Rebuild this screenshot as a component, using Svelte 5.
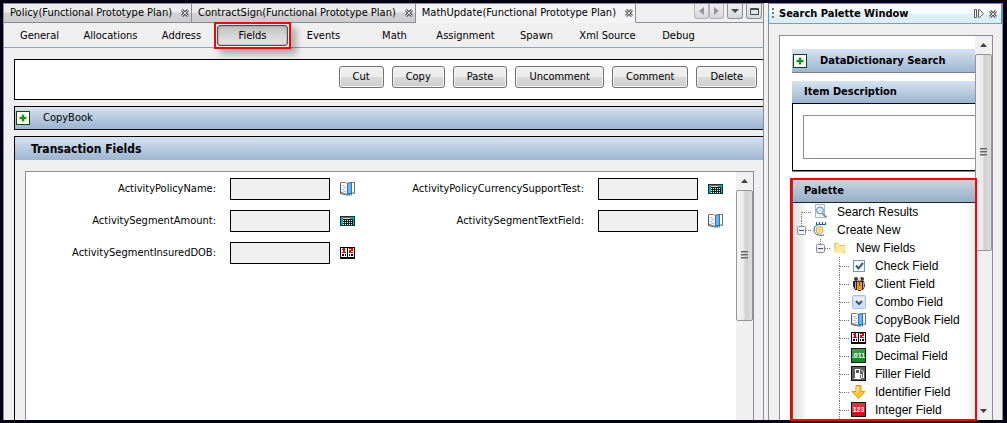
<script lang="ts">
	type TreeItem = { label: string; icon: string };

	const documents = ['Policy', 'ContractSign', 'MathUpdate'];
	const sections = [
		'General',
		'Allocations',
		'Address',
		'Fields',
		'Events',
		'Math',
		'Assignment',
		'Spawn',
		'Xml Source',
		'Debug'
	];
	const actions = ['Cut', 'Copy', 'Paste', 'Uncomment', 'Comment', 'Delete'];

	const fields = [
		{ name: 'ActivityPolicyName', icon: 'book' },
		{ name: 'ActivityPolicyCurrencySupportTest', icon: 'calculator' },
		{ name: 'ActivitySegmentAmount', icon: 'calculator' },
		{ name: 'ActivitySegmentTextField', icon: 'book' },
		{ name: 'ActivitySegmentInsuredDOB', icon: 'date' }
	];

	const newFields: TreeItem[] = [
		{ label: 'Check Field', icon: 'check' },
		{ label: 'Client Field', icon: 'client' },
		{ label: 'Combo Field', icon: 'combo' },
		{ label: 'CopyBook Field', icon: 'book' },
		{ label: 'Date Field', icon: 'date' },
		{ label: 'Decimal Field', icon: 'decimal' },
		{ label: 'Filler Field', icon: 'filler' },
		{ label: 'Identifier Field', icon: 'identifier' },
		{ label: 'Integer Field', icon: 'integer' }
	];

	let activeDocument = $state('MathUpdate');
	let activeSection = $state('Fields');
	let createOpen = $state(true);
	let fieldsOpen = $state(true);
</script>

{#snippet cross()}
	<svg width="8" height="8" viewBox="0 0 8 8" aria-hidden="true">
		<path d="M1 1l6 6M7 1l-6 6" stroke="#55565c" stroke-width="3" />
		<path d="M1 1l6 6M7 1l-6 6" stroke="#e4e4e6" stroke-width="1" />
	</svg>
{/snippet}

{#snippet plus()}
	<svg width="14" height="14" viewBox="0 0 14 14" aria-hidden="true">
		<rect x="0.5" y="0.5" width="13" height="13" fill="#fff" stroke="#0b4a0b" />
		<path d="M7 3v8M3 7h8" stroke="#9bd890" stroke-width="3" />
		<path d="M7 4v6M4 7h6" stroke="#12951b" stroke-width="2" />
	</svg>
{/snippet}

{#snippet icon(name: string)}
	<svg class="icon" width="16" height="16" viewBox="0 0 16 16" aria-hidden="true">
		{#if name === 'book'}
			<path d="M.5 1.5h5l2 1 2-1h5v10.500h-5l-2 1.500-2-1-5-1z" fill="#fff" stroke="#8b7b5c" />
			<path d="M.5 3v9.500l5 1 2 1" fill="none" stroke="#44577f" />
			<path d="M12.500 1.500h2v10.500h-2" fill="#fffbe8" stroke="#8b7030" />
			<path d="M7.500 3v10" stroke="#a7b1c2" />
			<path d="M2 4.500h3M3 6.500h3M2 8.500h3M3 10.500h3" stroke="#b5c3d8" />
			<path d="M7 2l5-1v14l-1.500-2-1.500 2.500L8 13H7z" fill="#1f74cf" />
			<path d="M8 2.500l3-.500v10H8z" fill="#68b5fb" />
		{:else if name === 'calculator'}
			<g shape-rendering="crispEdges">
				<path d="M0 3h15v10H0z" fill="#003b3b" />
				<path d="M1 4h13v8H1z" fill="#15a69d" />
				<path d="M3 4h7v2H3z" fill="#e9c8c8" />
				<path d="M3 4h7v1H3z" fill="#ba4b4b" />
				<path d="M3 6h10v6H3z" fill="#031e20" />
				<path
					d="M3 7h1v1H3zM5 7h1v1H5zM7 7h1v1H7zM9 7h1v1H9zM11 7h1v1h-1zM3 9h1v1H3zM5 9h1v1H5zM7 9h1v1H7zM9 9h1v1H9zM11 9h1v1h-1zM3 11h1v1H3zM5 11h1v1H5zM7 11h1v1H7zM9 11h1v1H9zM11 11h1v1h-1z"
					fill="#d9fffa"
				/>
			</g>
		{:else if name === 'date'}
			<g shape-rendering="crispEdges">
				<path d="M0 2h15v12H0z" fill="#000" />
				<path d="M1 3h6v9H1zM8 3h6v9H8z" fill="#fff" />
				<path d="M3 3h2v4h1v1H2V7h1V5H2V4h1z" fill="#e30000" />
				<path d="M9 3h4v3h-2v1h2v1H9V5h2V4H9z" fill="#e30000" />
				<path d="M2 9h2v2H2zM5 9h1v2H5zM9 9h1v2H9zM11 9h2v2h-2zM7 12h1v1H7z" fill="#000" />
			</g>
		{:else if name === 'search'}
			<path d="M2.5.5h9v13h-9z" fill="#f3f6fb" stroke="#a6b5c9" />
			<circle cx="7" cy="6.5" r="3.5" fill="#c9ebff" stroke="#718aa6" />
			<path d="M9.5 9.5l4 4" stroke="#a18b83" stroke-width="2" />
		{:else if name === 'create'}
			<path d="M3.5 0v3M6.5 0v3M9.5 0v3M12.5 0v3" stroke="#1261a0" />
			<path d="M13 2.5H6C3 2.500 1 5 1 8c0 4 4 6 10 5" fill="none" stroke="#1261a0" />
			<circle cx="6.5" cy="8" r="3.5" fill="#fff7d2" stroke="#d89a25" />
			<circle cx="6.5" cy="8" r="2" fill="#f6cd70" />
		{:else if name === 'folder'}
			<path d="M2 3h4l1 2h6v8H3z" fill="#e9bd50" />
			<path d="M4 6h10l-2 7H3z" fill="#ffe99b" />
			<path d="M3 4h3l1 2-3 1z" fill="#fff3bd" />
		{:else if name === 'check'}
			<rect x="2.5" y="2.5" width="11" height="11" fill="#f8fbff" stroke="#7794b5" />
			<path d="M5 7.5l2.500 3L12 5" fill="none" stroke="#345b83" stroke-width="2" />
		{:else if name === 'client'}
			<path d="M2 5h5v9H4l-2-4zM7 4h3v11H7zM10 5h3l1 5-2 4h-2z" fill="#242329" />
			<path d="M4 6h1v7H4zM12 6h1v6h-1z" fill="#aaa6a1" />
			<path d="M6 6h5v8H6z" fill="#ed9d13" />
			<path d="M8 5h1v5H8z" fill="#9d3720" />
			<circle cx="5" cy="3" r="2" fill="#44372f" />
			<circle cx="11" cy="3" r="2" fill="#44372f" />
			<circle cx="8.5" cy="3.5" r="1.500" fill="#ffd98c" />
		{:else if name === 'combo'}
			<rect x="1.5" y="1.5" width="13" height="13" rx="1" fill="#cfe0fc" stroke="#a6c0ea" />
			<path d="M3 3h10v5H3z" fill="#e4eeff" />
			<path d="M5 7l3 3 3-3" fill="none" stroke="#3e5371" stroke-width="2" />
		{:else if name === 'decimal' || name === 'integer'}
			<rect
				x="0.5"
				y="0.5"
				width="14"
				height="14"
				fill={name === 'decimal' ? '#0e8f20' : '#cd1418'}
				stroke="#18191a"
			/>
			<path d="M1 1h13v4L1 10z" fill="#fff" opacity="0.15" />
			<text x="7.5" y="10" text-anchor="middle" class="digits">
				{name === 'decimal' ? '.011' : '123'}
			</text>
		{:else if name === 'filler'}
			<rect x="0.5" y="0.5" width="14" height="14" fill="#5f5f5f" stroke="#111" />
			<path d="M4 3h5v9h1v1H3v-1h1z" fill="#fff" />
			<path d="M5 4h3v3H5z" fill="#555" />
			<path d="M9 8.500h1.500v3h2V6L10 3.500" fill="none" stroke="#fff" />
		{:else if name === 'identifier'}
			<path d="M5 1.5h5v6h4l-6.500 7-6.500-7h4z" fill="#ffc52d" stroke="#d99a1a" />
			<path d="M6.5 3v6" stroke="#ffe69a" stroke-width="2" />
		{/if}
	</svg>
{/snippet}

{#snippet guide(kind: string)}
	<svg class="guide" width="16" height="18" viewBox="0 0 16 18" aria-hidden="true">
		{#if kind !== 'first'}<path d="M4.5 0v9" />{/if}
		{#if kind === 'first' || kind === 'leaf'}<path d="M4.5 9v9" />{/if}
		<path d="M5 9.5h9" />
		{#if kind === 'open' || kind === 'closed'}
			<rect x="0.5" y="5.5" width="8" height="8" rx="1" />
			<path class="sign" d="M2 9.5h5" />
			{#if kind === 'closed'}<path class="sign" d="M4.5 7v5" />{/if}
		{/if}
	</svg>
{/snippet}

{#snippet arrow(down: boolean)}
	<svg width="7" height="4" viewBox="0 0 7 4" aria-hidden="true">
		<path d={down ? 'M0 0h7L3.500 4z' : 'M0 4h7L3.500 0z'} fill="#3f3f3f" />
	</svg>
{/snippet}

<div class="frame">
	<main class="editor">
		<div class="tabs">
			{#each documents as doc (doc)}
				<div class="tab" class:active={doc === activeDocument}>
					<button type="button" class="tab-name" onclick={() => (activeDocument = doc)}>
						{doc}(Functional Prototype Plan)
					</button>
					<button type="button" class="close" aria-label="Close {doc}">{@render cross()}</button>
				</div>
			{/each}
			<div class="window-tools">
				<div class="pair">
					<button type="button" aria-label="Scroll tabs left">
						<svg width="5" height="8" viewBox="0 0 5 8"><path d="M5 0v8L0 4z" fill="#93969b" /></svg>
					</button>
					<button type="button" aria-label="Scroll tabs right">
						<svg width="5" height="8" viewBox="0 0 5 8"><path d="M0 0v8l5-4z" fill="#93969b" /></svg>
					</button>
				</div>
				<button type="button" aria-label="Show open documents">
					<svg width="8" height="4" viewBox="0 0 8 4"><path d="M0 0h8L4 4z" fill="#3e4a50" /></svg>
				</button>
				<button type="button" aria-label="Maximize">
					<svg width="9" height="7" viewBox="0 0 9 7">
						<path d="M.5.5h8v6h-8zM0 1.5h9" fill="none" stroke="#3e4a50" />
					</svg>
				</button>
			</div>
		</div>

		<nav>
			{#each sections as section (section)}
				<button
					type="button"
					class="section"
					class:pressed={section === activeSection}
					onclick={() => (activeSection = section)}
				>
					{section}
				</button>
			{/each}
		</nav>

		<div class="work">
			<div class="actions">
				{#each actions as action (action)}
					<button type="button">{action}</button>
				{/each}
			</div>

			<div class="copybook">
				<button type="button" class="expand" aria-label="Expand CopyBook">{@render plus()}</button>
				<span>CopyBook</span>
			</div>

			<section class="transaction">
				<h2 class="bar">Transaction Fields</h2>
				<div class="sheet">
					<div class="fields">
						{#each fields as field (field.name)}
							<label for={field.name}>{field.name}:</label>
							<input id={field.name} type="text" readonly />
							{@render icon(field.icon)}
						{/each}
					</div>
					<div class="scrollbar main-scroll">
						<span class="arrow">{@render arrow(false)}</span>
						<span class="thumb"><i></i></span>
						<span class="rest"></span>
					</div>
				</div>
			</section>
		</div>
	</main>

	<aside>
		<header>
			<span class="grip"></span>
			<h1>Search Palette Window</h1>
			<button type="button" class="close" aria-label="Minimize palette">
				<svg width="10" height="9" viewBox="0 0 10 9">
					<path d="M.5.5h2v8h-2zM4.500.5h1l4 4-4 4h-1z" fill="#f5f5f5" stroke="#55565c" />
				</svg>
			</button>
			<button type="button" class="close" aria-label="Close palette">{@render cross()}</button>
		</header>

		<div class="side">
			<div class="side-content">
				<div class="dictionary bar">
					<button type="button" class="expand" aria-label="Expand DataDictionary Search">
						{@render plus()}
					</button>
					<h2>DataDictionary Search</h2>
				</div>

				<section class="description">
					<h2 class="bar" id="description-title">Item Description</h2>
					<div class="description-box">
						<textarea aria-labelledby="description-title" readonly></textarea>
					</div>
				</section>

				<section class="palette">
					<h2 class="bar">Palette</h2>
					<ul class="tree">
						<li>
							<div class="row">
								{@render guide('first')}{@render icon('search')}<span>Search Results</span>
							</div>
						</li>
						<li>
							<div class="row">
								<button
									type="button"
									class="toggle"
									aria-label="Toggle Create New"
									onclick={() => (createOpen = !createOpen)}
								>
									{@render guide(createOpen ? 'open' : 'closed')}
								</button>
								{@render icon('create')}<span>Create New</span>
							</div>
							{#if createOpen}
								<ul>
									<li>
										<div class="row">
											<button
												type="button"
												class="toggle"
												aria-label="Toggle New Fields"
												onclick={() => (fieldsOpen = !fieldsOpen)}
											>
												{@render guide(fieldsOpen ? 'open' : 'closed')}
											</button>
											{@render icon('folder')}<span>New Fields</span>
										</div>
										{#if fieldsOpen}
											<ul>
												{#each newFields as item (item.label)}
													<li class="row">
														{@render guide('leaf')}{@render icon(item.icon)}<span>{item.label}</span>
													</li>
												{/each}
											</ul>
										{/if}
									</li>
								</ul>
							{/if}
						</li>
					</ul>
				</section>
			</div>
			<div class="scrollbar side-scroll">
				<span class="arrow">{@render arrow(false)}</span>
				<span class="thumb"><i></i></span>
				<span class="rest"></span>
				<span class="arrow">{@render arrow(true)}</span>
			</div>
		</div>
	</aside>
</div>

<style>
	:global(body) {
		margin: 0;
	}

	.frame {
		box-sizing: border-box;
		display: flex;
		min-height: 100vh;
		padding: 3px 4px 3px 3px;
		background: #000014;
		font-family: 'DejaVu Sans Condensed', 'DejaVu Sans', sans-serif;
		font-stretch: condensed;
		font-size: 11px;
		line-height: 14px;
		color: #000;
	}

	.frame :global(*) {
		box-sizing: border-box;
	}

	svg {
		display: block;
		flex: none;
	}

	button {
		padding: 0;
		border: 0;
		background: none;
		font: inherit;
		color: inherit;
		white-space: nowrap;
	}

	h1,
	h2 {
		margin: 0;
		font-size: 11px;
		line-height: 16px;
		white-space: nowrap;
	}

	ul {
		margin: 0;
		padding: 0;
		list-style: none;
	}

	.editor {
		display: flex;
		flex: 1;
		flex-direction: column;
		min-width: 0;
		border: 1px solid #898c95;
		border-bottom: 0;
		background: #efefef;
	}

	.tabs {
		display: flex;
		height: 19px;
	}

	.tab {
		display: flex;
		align-items: center;
		gap: 9px;
		padding: 0 2px 0 6px;
		border-right: 1px solid #898c95;
		border-bottom: 1px solid #898c95;
		background: linear-gradient(#ececec 45%, #d2d2d2 50%, #cdcdcd);
	}

	.tab.active {
		border-bottom-color: #f4f4f4;
		background: #f4f4f4;
	}

	.close {
		display: grid;
		place-items: center;
	}

	.window-tools {
		display: flex;
		flex: 1;
		justify-content: flex-end;
		gap: 3px;
		padding-right: 1px;
		border-bottom: 1px solid #898c95;
	}

	.window-tools button {
		display: grid;
		place-items: center;
		width: 16px;
		height: 15px;
		border: 1px solid #8d9094;
		border-top: 0;
		border-radius: 0 0 3px 3px;
		background: linear-gradient(#efefef, #d8d8d8);
	}

	.pair {
		display: flex;
	}

	.pair button {
		width: 15px;
		border-color: #b4b4b4;
	}

	nav {
		display: flex;
		height: 25px;
		padding-top: 2px;
		border-bottom: 1px solid #8aa5c2;
	}

	.section {
		width: 71px;
		height: 21px;
	}

	.section.pressed {
		position: relative;
		z-index: 1;
		border: 1px solid #4e4e4e;
		border-radius: 3px;
		background: linear-gradient(#bdbdbd, #d4d4d4 45%, #e4e4e4);
		box-shadow: inset 0 0 2px #777;
	}

	.section.pressed::after {
		content: '';
		position: absolute;
		inset: -4px;
		border: 2px solid #ff0000;
		box-shadow: 6px 6px 6px rgba(0, 0, 0, 0.25);
	}

	.work {
		display: flex;
		flex: 1;
		flex-direction: column;
		gap: 6px;
		padding: 11px 0 0 10px;
	}

	.actions {
		display: flex;
		justify-content: flex-end;
		gap: 8px;
		padding: 6px 6px 11px;
		border: 1px solid #000;
		border-right: 0;
		background: #fff;
	}

	.actions button {
		height: 22px;
		padding: 0 13px;
		border: 1px solid #707070;
		border-radius: 3px;
		background: linear-gradient(#f2f2f2, #ebebeb 48%, #dadada 52%, #cdcdcd);
		box-shadow: inset 0 0 0 1px #f6f6f6;
	}

	.copybook {
		display: flex;
		align-items: center;
		gap: 13px;
		height: 24px;
		padding-left: 1px;
		border: 1px solid #000;
		border-right: 0;
		background: linear-gradient(#dfe3f5, #ccdaea 15%, #9bb4d1);
	}

	.bar {
		background: linear-gradient(#d7e2f0, #9bb5d2);
	}

	.transaction {
		display: flex;
		flex: 1;
		flex-direction: column;
		border: 1px solid #000;
		border-width: 1px 0 0 1px;
	}

	.transaction .bar {
		padding: 4px 16px 3px;
		font-size: 12px;
	}

	.sheet {
		display: flex;
		flex: 1;
		margin: 11px 9px 0 10px;
		border: 1px solid #898c95;
		border-bottom: 0;
		background: #fff;
	}

	.fields {
		display: grid;
		flex: 1;
		grid-template-columns: 194px 100px 16px minmax(0, 1fr) 100px 16px;
		align-content: start;
		align-items: center;
		gap: 10px;
		padding: 6px 12px 0 0;
	}

	label {
		padding-right: 4px;
		text-align: right;
		white-space: nowrap;
	}

	input {
		width: 100%;
		height: 22px;
		border: 1px solid #000;
		background: #efefef;
		font: inherit;
	}

	.scrollbar {
		display: flex;
		flex: none;
		flex-direction: column;
		width: 17px;
		background: #f0f0f0;
	}

	.arrow {
		display: grid;
		place-items: center;
		height: 18px;
	}

	.thumb {
		display: grid;
		place-items: center;
		border: 1px solid #969696;
		border-radius: 2px;
		background: linear-gradient(90deg, #f4f4f4, #e9e9e9 45%, #d0d0d0 55%, #dcdcdc);
	}

	.thumb i {
		width: 7px;
		height: 8px;
		background: repeating-linear-gradient(#666 0 1px, #aaa 1px 2px, transparent 2px 3px);
	}

	.main-scroll .thumb {
		flex: 130;
	}

	.main-scroll .rest {
		flex: 100;
	}

	aside {
		display: flex;
		flex: none;
		flex-direction: column;
		width: 239px;
		border-right: 1px solid #898c95;
		border-left: 4px solid #efefef;
		background: #efefef;
	}

	header {
		display: flex;
		align-items: center;
		gap: 5px;
		height: 21px;
		padding: 0 4px 0 3px;
		border: 1px solid #4c9cc4;
		border-bottom-color: #7d9db5;
		background: linear-gradient(#fff, #f2fafd 50%, #ddeff7 55%, #daecf4);
	}

	header h1 {
		flex: 1;
	}

	.grip {
		width: 2px;
		height: 11px;
		background: repeating-linear-gradient(#777 0 2px, transparent 2px 4px);
	}

	.side {
		display: flex;
		flex: 1;
		padding: 11px 9px 0 10px;
		border-left: 1px solid #898c95;
	}

	.side-content {
		flex: 1;
		min-width: 0;
		padding: 13px 0 0 12px;
		border: 1px solid #898c95;
		border-width: 1px 0 0 1px;
		background: #fff;
	}

	.dictionary {
		display: flex;
		align-items: center;
		gap: 13px;
		height: 24px;
		padding-left: 1px;
		border-bottom: 1px solid #808080;
	}

	.description {
		margin-top: 8px;
		border-bottom: 1px solid #808080;
	}

	.description .bar {
		padding: 3px 12px;
	}

	.description-box {
		padding: 11px 0 11px 10px;
		border: 1px solid #000;
		border-right: 0;
	}

	textarea {
		display: block;
		width: 100%;
		height: 44px;
		border: 1px solid #898c95;
		border-right: 0;
		background: #fff;
		resize: none;
	}

	.palette {
		position: relative;
		margin-top: 8px;
		border-left: 1px solid #555;
		background: linear-gradient(90deg, #dcdcd8, #fff 14px, #fff calc(100% - 12px), #f0f0ee);
	}

	.palette::after {
		content: '';
		position: absolute;
		inset: -2px -2px -2px -3px;
		border: 2px solid #ff0000;
		pointer-events: none;
	}

	.palette .bar {
		padding: 3px 11px;
		border-bottom: 1px solid #222;
		background: linear-gradient(#c9d3df, #97afc9);
	}

	.tree {
		padding-left: 4px;
		font: 12px/18px 'Liberation Sans', Arial, sans-serif;
	}

	.tree ul {
		margin-left: 19px;
	}

	.row {
		display: flex;
		align-items: center;
		height: 18px;
		white-space: nowrap;
	}

	.row span {
		margin-left: 8px;
	}

	.guide path {
		stroke: #777;
		stroke-dasharray: 1 1;
	}

	.guide rect {
		fill: #f2f2f2;
		stroke: #8c8c8c;
	}

	.guide .sign {
		stroke: #3650a0;
		stroke-dasharray: none;
	}

	.digits {
		fill: #fff;
		font: bold 7px 'Liberation Sans', Arial, sans-serif;
	}

	.side-scroll {
		width: 18px;
		border: 1px solid #898c95;
		border-width: 1px 1px 0 0;
	}

	.side-scroll .thumb {
		flex: 194;
	}

	.side-scroll .rest {
		flex: 151;
	}
</style>
